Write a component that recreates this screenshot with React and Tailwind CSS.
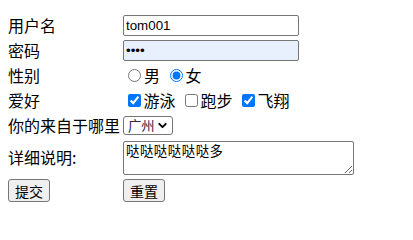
import React from "react";
import { ChevronDown } from "lucide-react";

const cjk = { fontFamily: '"Noto Sans CJK SC", "Liberation Sans", sans-serif' };

export default function App() {
  return (
    <div
      className="bg-white w-[413px] h-[210px] pl-[8px] pt-[14px] text-[16px] text-black"
      style={cjk}
    >
      <div className="grid grid-cols-[115px_auto] gap-y-[2px] leading-[21px]">
        {/* 用户名 */}
        <div className="h-[23px] flex items-center">用户名</div>
        <div className="h-[23px] flex items-center">
          <input
            type="text"
            defaultValue="tom001"
            className="w-[176px] h-[21px] border border-[#767676] rounded-[2px] px-[2px] text-[13.33px] font-['Liberation_Sans',sans-serif]"
          />
        </div>

        {/* 密码 */}
        <div className="h-[23px] flex items-center">密码</div>
        <div className="h-[23px] flex items-center">
          <input
            type="password"
            defaultValue="1234"
            className="w-[176px] h-[21px] border border-[#767676] rounded-[2px] px-[2px] text-[13.33px] bg-[#e8f0fe] font-['Liberation_Sans',sans-serif]"
          />
        </div>

        {/* 性别 */}
        <div className="h-[23px] flex items-center">性别</div>
        <div className="h-[23px] flex items-center">
          <input
            type="radio"
            name="sex"
            className="ml-[5px] mr-[3px] w-[13px] h-[13px] accent-[#0075ff]"
          />
          <span>男</span>
          <input
            type="radio"
            name="sex"
            defaultChecked
            className="ml-[9.5px] mr-[3px] w-[13px] h-[13px] accent-[#0075ff]"
          />
          <span>女</span>
        </div>

        {/* 爱好 */}
        <div className="h-[23px] flex items-center">爱好</div>
        <div className="h-[23px] flex items-center">
          <input
            type="checkbox"
            defaultChecked
            className="ml-[4.5px] mr-[3px] w-[13px] h-[13px] accent-[#0075ff]"
          />
          <span>游泳</span>
          <input
            type="checkbox"
            className="ml-[9px] mr-[3px] w-[13px] h-[13px] accent-[#0075ff]"
          />
          <span>跑步</span>
          <input
            type="checkbox"
            defaultChecked
            className="ml-[9px] mr-[3px] w-[13px] h-[13px] accent-[#0075ff]"
          />
          <span>飞翔</span>
        </div>

        {/* 来自 */}
        <div className="h-[23px] flex items-center">你的来自于哪里</div>
        <div className="h-[23px] flex items-center">
          <div className="w-[50px] h-[19px] border border-[#767676] rounded-[3px] flex items-center justify-between pl-[4px] pr-[3px] text-[13.33px]">
            <span className="text-[#2f2350]">广州</span>
            <ChevronDown size={13} strokeWidth={3.5} />
          </div>
        </div>

        {/* 详细说明 */}
        <div className="h-[37px] flex items-center">详细说明:</div>
        <div className="h-[37px] flex items-center">
          <textarea
            defaultValue="哒哒哒哒哒哒多"
            className="w-[231px] h-[34px] border border-[#767676] rounded-[2px] px-[2px] py-[1px] text-[13.33px] leading-[16px] tracking-[0.6px]"
          />
        </div>

        {/* 按钮 */}
        <div className="h-[25px] flex items-center">
          <button className="w-[42px] h-[23px] border border-[#767676] rounded-[3px] bg-[#efefef] text-[14px] leading-none">
            提交
          </button>
        </div>
        <div className="h-[25px] flex items-center">
          <button className="w-[42px] h-[23px] border border-[#767676] rounded-[3px] bg-[#efefef] text-[14px] leading-none">
            重置
          </button>
        </div>
      </div>
    </div>
  );
}
